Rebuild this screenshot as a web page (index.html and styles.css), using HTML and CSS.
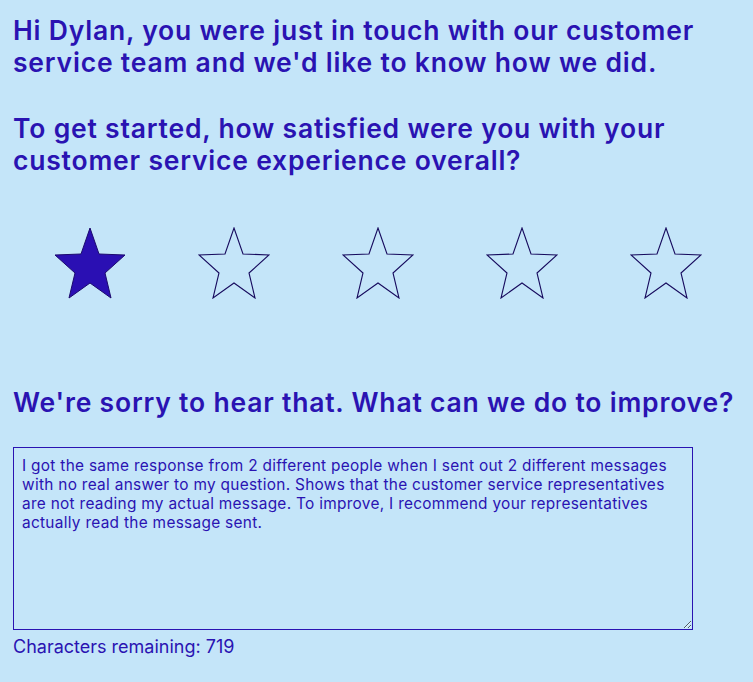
FILE: index.html
```html
<!DOCTYPE html>
<html lang="en">
<head>
<meta charset="utf-8">
<title>Survey</title>
<link rel="stylesheet" href="styles.css">
</head>
<body>
<main class="survey">
  <h1 class="intro">Hi Dylan, you were just in touch with our customer service team and we'd like to know how we did.</h1>
  <h2 class="question">To get started, how satisfied were you with your customer service experience overall?</h2>
  <div class="stars">
    <span class="star"><svg viewBox="0 0 72 72" width="72" height="72"><polygon class="filled" points="36,1 45,27 71,28 51,46 57,71 36,56 15,71 21,46 1,28 27,27"/></svg></span>
    <span class="star"><svg viewBox="0 0 72 72" width="72" height="72"><polygon class="empty" points="36,1 45,27 71,28 51,46 57,71 36,56 15,71 21,46 1,28 27,27"/></svg></span>
    <span class="star"><svg viewBox="0 0 72 72" width="72" height="72"><polygon class="empty" points="36,1 45,27 71,28 51,46 57,71 36,56 15,71 21,46 1,28 27,27"/></svg></span>
    <span class="star"><svg viewBox="0 0 72 72" width="72" height="72"><polygon class="empty" points="36,1 45,27 71,28 51,46 57,71 36,56 15,71 21,46 1,28 27,27"/></svg></span>
    <span class="star"><svg viewBox="0 0 72 72" width="72" height="72"><polygon class="empty" points="36,1 45,27 71,28 51,46 57,71 36,56 15,71 21,46 1,28 27,27"/></svg></span>
  </div>
  <h2 class="followup">We're sorry to hear that. What can we do to improve?</h2>
  <textarea class="feedback" id="feedback">I got the same response from 2 different people when I sent out 2 different messages with no real answer to my question. Shows that the customer service representatives are not reading my actual message. To improve, I recommend your representatives actually read the message sent. </textarea>
  <p class="remaining">Characters remaining: 719</p>
</main>
<script src="script.js"></script>
</body>
</html>
```
FILE: styles.css
```css
html, body {
  margin: 0;
  padding: 0;
  background: #c4e5f9;
}
body {
  font-family: Inter, "Noto Sans", sans-serif;
  color: #2a13b2;
}
.survey {
  padding: 14px 4px 0 13px;
}
.intro, .question, .followup {
  font-size: 26.5px;
  font-weight: 600;
  line-height: 32px;
  margin: 0;
  letter-spacing: 0.8px;
}
.intro, .question {
  max-width: 720px;
}
.question {
  margin-top: 34px;
}
.stars {
  display: grid;
  grid-template-columns: repeat(5, 144px);
  margin: 51px 0 0 5px;
}
.star {
  display: flex;
  justify-content: center;
}
.star svg {
  display: block;
}
.filled {
  fill: #2a0fb3;
  stroke: #1c0a6e;
  stroke-width: 1;
}
.empty {
  fill: none;
  stroke: #170b5e;
  stroke-width: 1.1;
}
.followup {
  margin-top: 87px;
  white-space: nowrap;
}
.feedback {
  display: block;
  box-sizing: border-box;
  width: 680px;
  height: 183px;
  margin-top: 29px;
  padding: 8px 8px;
  background: transparent;
  border: 1px solid #2a13b2;
  border-radius: 0;
  outline: none;
  font-family: Inter, "Noto Sans", sans-serif;
  font-size: 15.4px;
  letter-spacing: 0.3px;
  line-height: 19px;
  color: #2a13b2;
  caret-color: #1c0a6e;
  resize: both;
}
.remaining {
  margin: 6px 0 0 0;
  font-size: 18px;
  line-height: 22px;
}
```
FILE: script.js
```js
var box = document.getElementById('feedback');
box.focus();
box.setSelectionRange(box.value.length, box.value.length);
```
